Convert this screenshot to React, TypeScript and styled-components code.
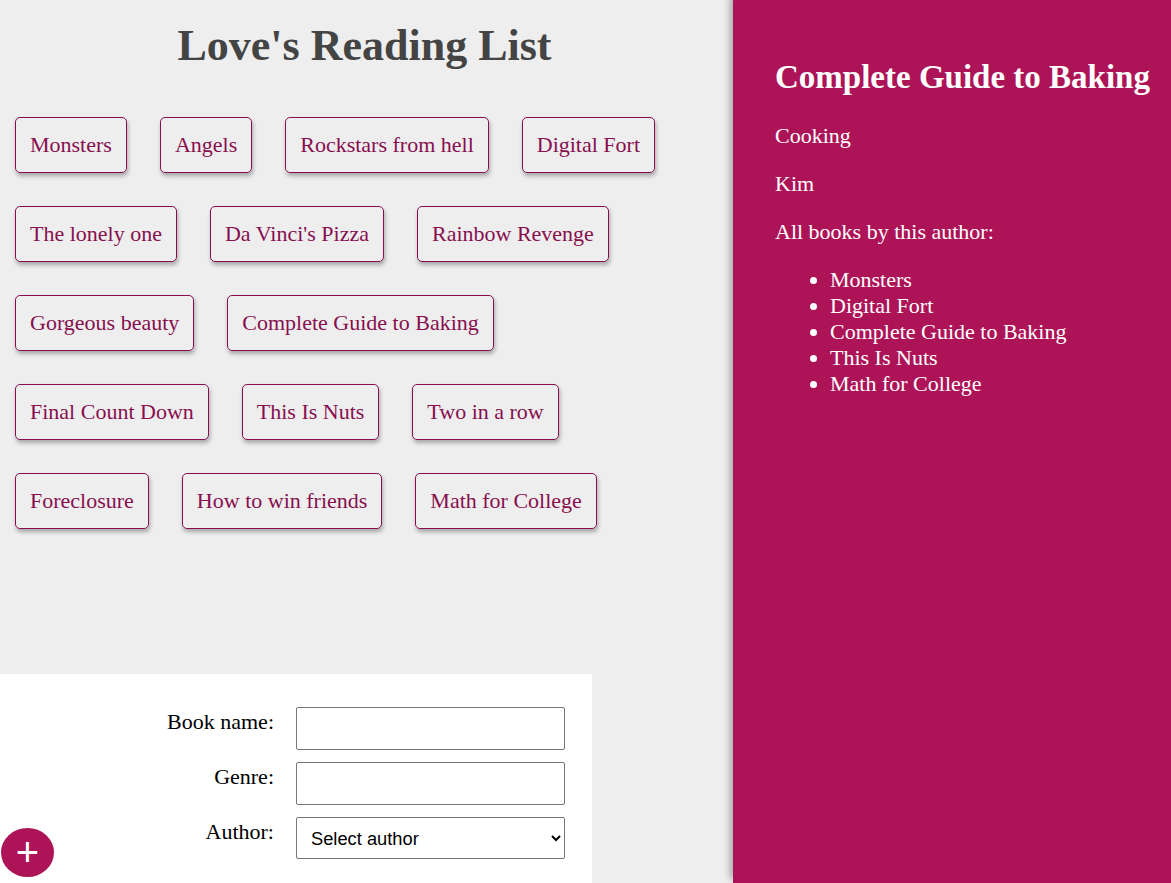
import styled, { createGlobalStyle } from 'styled-components';

const GlobalStyle = createGlobalStyle`
  body {
    margin: 0;
    background: #eee;
    font-family: "Liberation Serif", "Times New Roman", serif;
    font-size: 22px;
    overflow: hidden;
  }
`;

const Page = styled.div`
  display: grid;
  grid-template-columns: 733px 1fr;
  height: 100vh;
`;

const Main = styled.div`
  display: flex;
  flex-direction: column;
  height: 100vh;
`;

const Title = styled.h1`
  margin: 21px 0 0;
  padding-right: 4px;
  font-size: 44px;
  line-height: 50px;
  color: #444;
  text-align: center;
`;

const BookList = styled.ul`
  list-style: none;
  margin: 46px 0 0;
  padding: 0 30px 0 15px;
  display: flex;
  flex-wrap: wrap;
  gap: 33px;
`;

const BookItem = styled.li`
  padding: 14px;
  line-height: 26px;
  color: #880e4f;
  border: 1px solid #880e4f;
  border-radius: 5px;
  box-shadow: 1px 3px 4px rgba(0, 0, 0, 0.3);
  cursor: pointer;
`;

const AddForm = styled.form`
  position: relative;
  margin-top: auto;
  width: 592px;
  box-sizing: border-box;
  padding: 27px 27px 19px;
  background: #fff;
`;

const Field = styled.div`
  display: grid;
  grid-template-columns: 1fr 269px;
  column-gap: 14px;
`;

const Label = styled.label`
  text-align: right;
  padding: 8px;
  line-height: 26px;
  color: #000;
`;

const TextInput = styled.input`
  height: 43px;
  margin: 6px 0;
  box-sizing: border-box;
  border: 1px solid #767676;
  border-radius: 2px;
  padding: 8px;
  font-size: 18px;
`;

const Select = styled.select`
  height: 42px;
  margin: 6px 0 5px;
  box-sizing: border-box;
  border: 1px solid #767676;
  border-radius: 2px;
  padding: 0 8px 0 10px;
  background: #fff;
  color: #000;
  font-family: "Liberation Sans", Arial, sans-serif;
  font-size: 18.3px;
`;

const AddButton = styled.button`
  position: absolute;
  left: 1px;
  bottom: 6px;
  width: 53px;
  height: 49px;
  padding: 0;
  border: 0;
  border-radius: 50%;
  background: #ad1457;
  color: #fff;
  font-family: "Liberation Sans", Arial, sans-serif;
  font-size: 40px;
  line-height: 49px;
  cursor: pointer;
`;

const Details = styled.div`
  position: relative;
  background: #ad1457;
  color: #fff;
  padding: 31px 18px 30px 42px;
  box-shadow: -3px -4px 7px rgba(0, 0, 0, 0.3);
  overflow: hidden;

  h2 {
    margin: 27px 0;
    font-size: 33px;
    line-height: 38px;
    white-space: nowrap;
  }

  p {
    margin: 22px 0;
    line-height: 26px;
  }

  ul {
    margin: 22px 0;
    padding-left: 55px;
    line-height: 26px;
  }
`;

const books = [
  'Monsters',
  'Angels',
  'Rockstars from hell',
  'Digital Fort',
  'The lonely one',
  "Da Vinci's Pizza",
  'Rainbow Revenge',
  'Gorgeous beauty',
  'Complete Guide to Baking',
  'Final Count Down',
  'This Is Nuts',
  'Two in a row',
  'Foreclosure',
  'How to win friends',
  'Math for College',
];

const authorBooks = ['Monsters', 'Digital Fort', 'Complete Guide to Baking', 'This Is Nuts', 'Math for College'];

const App = () => {
  return (
    <>
      <GlobalStyle />
      <Page>
        <Main>
          <Title>Love's Reading List</Title>
          <BookList>
            {books.map((b) => (
              <BookItem key={b}>{b}</BookItem>
            ))}
          </BookList>

          <AddForm onSubmit={(e) => e.preventDefault()}>
            <Field>
              <Label>Book name:</Label>
              <TextInput type='text' />
            </Field>
            <Field>
              <Label>Genre:</Label>
              <TextInput type='text' />
            </Field>
            <Field>
              <Label>Author:</Label>
              <Select defaultValue=''>
                <option value=''>Select author</option>
              </Select>
            </Field>
            <AddButton type='submit'>+</AddButton>
          </AddForm>
        </Main>

        <Details>
          <h2>Complete Guide to Baking</h2>
          <p>Cooking</p>
          <p>Kim</p>
          <p>All books by this author:</p>
          <ul>
            {authorBooks.map((b) => (
              <li key={b}>{b}</li>
            ))}
          </ul>
        </Details>
      </Page>
    </>
  );
};

export default App;
